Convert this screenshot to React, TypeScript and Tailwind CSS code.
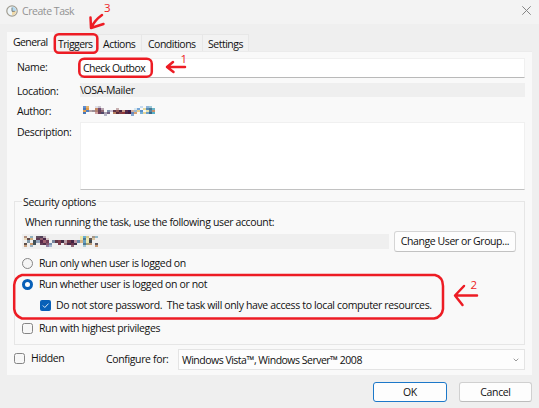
import React from "react";

function Mosaic({ rows, cell, height }: { rows: string[]; cell: number; height: number }) {
  const width = rows[0].split(" ").length * cell;
  return (
    <svg width={width} height={rows.length * height} shapeRendering="crispEdges" className="shrink-0">
      {rows.map((row, y) =>
        row.split(" ").map((fill, x) =>
          fill === "." ? null : <rect key={`${x}-${y}`} x={x * cell} y={y * height} width={cell} height={height} fill={fill} />
        )
      )}
    </svg>
  );
}

const authorRows = [
  "#5f8fd0 #e3b36f . . #e0e0e8 #c8c2cc . . . . . . . . . . . . . #c8dcf0 . #8fb4d8 #9ac8d8 .",
  "#4d77b4 #e29a48 . . #c58863 #704970 #b9a6b0 . . . . #c8b0b0 . . . . . #d8e8f0 #78a8d8 . #e4d99c #578db7 #4c7891 #6cb6c7",
  "#e2a050 #5080c0 #b7a6a8 #9c8f98 #b08070 #67455b #8c6772 . #8090a8 #c9bfd2 #5f3648 #8e5351 #45233e #c59a8a #592a47 #302050 #d0b0a0 #9bb7d1 #e8d090 #5890c8 . #e7e2ad #5885a3 #c8906a",
  "#4878b8 . . . #d0a0a0 #704058 #504868 #a8a0b0 #706080 . #b88060 #582838 #804048 #903838 #482848 #481838 #6888b8 #d8a070 . #78b0d8 #e8d898 #70a0c8 #386888 #58b0c8",
  ". . . . . . . #b8b8c8 . . . . . . . . #88a8d0 . . . . . . .",
];

const accountRows = [
  "#b09080 . #8fb0c0 . #605060 #504058 #b8a8b0 . . . . . . . . . . . #ece8b0 #6ab0d0 #d8c888 . #a89886 #90b8c8",
  "#e8d8b8 #604848 #d0b080 . #603850 #8f6070 #482848 #d8c8c8 . . . . . . . . . . #ece8b0 #487898 #ece8b0 #605858 #dcc8a0 .",
  ". #8098a8 . #405058 #90a0b8 #582848 #a06070 #704058 . #7888a0 #603848 #804050 #402840 #b8a0a8 #703848 #402040 #b890a0 #6888a8 #d8b888 #68a0c0 #ece8b0 #404850 . .",
  "#605048 . #c89870 #405058 . #684058 #503048 #885870 #7890b0 . . #804050 . #a07078 #482848 #683048 #403048 . . #487898 #a8a070 #b89878 . #605860",
  "#c8a080 . #98b0c0 . . . . #9080a0 #a8b8d0 . . . . . . #906878 . . . #a8c8d0 . . . #c89870",
];

function Clock() {
  return (
    <svg width="12" height="12" viewBox="0 0 12 12" className="shrink-0">
      <circle cx="6" cy="6" r="5.2" fill="#eef5f8" stroke="#a09c90" strokeWidth="1.2" />
      <path d="M6 6V1.8A4.2 4.2 0 0 1 10.2 6Z" fill="#b5daf0" />
      <path d="M6 6H10.2A4.2 4.2 0 0 1 6 10.2Z" fill="#f0d9a8" />
      <path d="M6 2.6V6.3H8.8" fill="none" stroke="#777c7d" />
    </svg>
  );
}

function Radio({ checked = false }: { checked?: boolean }) {
  return checked ? (
    <span className="size-[11px] shrink-0 rounded-full border-[3.5px] border-[#0860b8] bg-white" />
  ) : (
    <span className="size-[11px] shrink-0 rounded-full border border-[#858585] bg-[#f5f5f5]" />
  );
}

function Box() {
  return <span className="size-[11px] shrink-0 rounded-[2.5px] border border-[#858585] bg-[#f7f7f7]" />;
}

function Tab({ children, className }: { children: React.ReactNode; className: string }) {
  return (
    <div className={`flex h-[17px] items-center border-t border-r border-[#e7e7e7] bg-[#f2f2f2] pt-[2px] ${className}`}>
      {children}
    </div>
  );
}

function Annotations() {
  return (
    <svg className="pointer-events-none absolute inset-0" width="539" height="408" fill="none" stroke="#ed1c24" strokeWidth="2.5" strokeLinecap="round" strokeLinejoin="round">
      <rect x="54.800" y="34.200" width="42.500" height="18.500" rx="4" />
      <rect x="79.300" y="58.700" width="72.500" height="18" rx="5" />
      <path d="M22 275H435Q443 277 443 286V309Q442 317 434 318.500H22Q15 316 14.200 309V285Q15 277 22 275Z" />
      <path d="M102 15Q95 20 91.500 27M90.500 17.500L91 28L103.500 24" />
      <path d="M185 67H167M173 62L167 67L173.500 72" />
      <path d="M477 295.500H456M464 286L455 295.500L462.500 305" />
      <g fill="#ed1c24" stroke="none" className="font-['Open_Sans',sans-serif] text-[11.5px]">
        <text x="104" y="12">3</text>
        <text x="180.500" y="63">1</text>
        <text x="470.500" y="289">2</text>
      </g>
    </svg>
  );
}

export default function App() {
  return (
    <div className="relative flex h-[408px] w-[539px] flex-col overflow-hidden bg-[#efefef] font-['Open_Sans','Noto_Sans',sans-serif] text-[10.5px] leading-[15px] tracking-[-0.36px] whitespace-nowrap text-[#111111]">
      <header className="flex h-[24px] shrink-0 items-center justify-between bg-[#f3f3f3] pr-[8px] pl-[6px] text-[#929292]">
        <div className="flex items-center gap-[4px] pb-[2px]">
          <Clock />
          <span className="tracking-[-0.45px]">Create Task</span>
        </div>
        <svg width="9" height="9" viewBox="0 0 9 9" className="mb-[3px]" stroke="#858585"><path d="M.3.3 8.700 8.700M8.700.3.3 8.700" /></svg>
      </header>

      <nav className="flex h-[27px] shrink-0 items-end pl-[7px] tracking-[-0.5px]">
        <div className="flex h-[19px] w-[47px] items-center bg-[#f9f9f9] pt-[1px] pl-[6px] tracking-[-0.6px]">General</div>
        <Tab className="w-[45px] pl-[4px] tracking-[-0.6px]">Triggers</Tab>
        <Tab className="w-[43px] pl-[4px]">Actions</Tab>
        <Tab className="w-[61px] pl-[6px]">Conditions</Tab>
        <Tab className="w-[46px] pl-[5px]">Settings</Tab>
      </nav>

      <main className="ml-[7px] flex h-[324px] w-[525px] shrink-0 flex-col border-t border-[#ebebeb] bg-[#f9f9f9] pr-[7px] pl-[7px]">
        <div className="mt-[6px] flex h-[20px] items-center">
          <span className="w-[66px] pb-[1px] pl-[3px]">Name:</span>
          <div className="flex h-full flex-1 items-center border border-b-[#b9b9b9] border-[#f0f0f0] bg-white pt-[1px] pl-[2px] tracking-[-0.55px]">Check Outbox</div>
        </div>
        <div className="mt-[5px] flex h-[14px] items-center">
          <span className="w-[66px] pt-[2px] pl-[3px]">Location:</span>
          <div className="flex h-full flex-1 items-center bg-[#efefef] tracking-[-0.36px]">\OSA-Mailer</div>
        </div>
        <div className="mt-[6px] flex h-[15px] items-center">
          <span className="w-[69px] pt-[1px] pl-[3px]">Author:</span>
          <Mosaic rows={authorRows} cell={3} height={2} />
        </div>
        <div className="mt-[4px] flex h-[68px]">
          <span className="w-[66px] pt-[3px] pl-[3px]">Description:</span>
          <div className="flex-1 border border-b-[#c2c2c2] border-[#f0f0f0] bg-white" />
        </div>

        <fieldset className="mt-[4px] h-[151px] border border-[#e6e6e6] pl-[7px]">
          <legend className="ml-0 px-[1px] leading-[15px]"><span className="relative top-px">Security options</span></legend>
          <div className="mt-[6px] h-[15px] pl-[3px]">When running the task, use the following user account:</div>
          <div className="flex h-[22px] items-center">
            <div className="flex h-[15px] w-[367px] items-center bg-[#efefef] pl-[2px]"><Mosaic rows={accountRows} cell={3.1} height={2.2} /></div>
            <button className="ml-[5px] h-[21px] w-[122px] rounded-[3px] border border-[#d5d5d5] border-b-[#c2c2c2] bg-[#fdfdfd] pt-[1px] tracking-[-0.42px]">Change User or Group...</button>
          </div>
          <div className="mt-[1px] flex h-[20px] items-center gap-[6px]"><Radio /><span>Run only when user is logged on</span></div>
          <div className="flex h-[22px] items-center gap-[6px]"><Radio checked /><span>Run whether user is logged on or not</span></div>
          <div className="flex h-[20px] items-center gap-[5px] pl-[18px]">
            <svg width="11" height="11" viewBox="0 0 11 11"><rect width="11" height="11" rx="2" fill="#0860b8" /><path d="m2.800 5.500 2 2 3.700-3.900" fill="none" stroke="#d8e8f6" /></svg>
            <span className="whitespace-pre">Do not store password.  The task will only have access to local computer resources.</span>
          </div>
          <div className="mt-[3px] flex h-[20px] items-center gap-[6px]"><Box /><span>Run with highest privileges</span></div>
        </fieldset>

        <div className="mt-[4px] flex h-[21px] items-center">
          <div className="flex w-[92px] items-center gap-[6px] pb-[2px]"><Box /><span>Hidden</span></div>
          <span className="w-[72px]">Configure for:</span>
          <div className="flex h-full flex-1 items-center justify-between border border-[#e4e4e4] bg-[#fdfdfd] pr-[5px] pl-[3px]">
            <span className="pt-[1px] tracking-[-0.5px]">Windows Vista™, Windows Server™ 2008</span>
            <svg width="6" height="4" viewBox="0 0 6 4" fill="none" stroke="#9a9a9a"><path d="m.7.7 2.300 2.300 2.300-2.300" /></svg>
          </div>
        </div>
      </main>

      <footer className="mt-[7px] flex h-[20px] shrink-0 gap-[12px] pl-[373px]">
        <button className="w-[74px] rounded-[3px] border border-[#1c78c9] bg-[#fdfdfd]">OK</button>
        <button className="w-[73px] rounded-[3px] border border-[#d0d0d0] border-b-[#bcbcbc] bg-[#fdfdfd]">Cancel</button>
      </footer>
      <Annotations />
    </div>
  );
}
